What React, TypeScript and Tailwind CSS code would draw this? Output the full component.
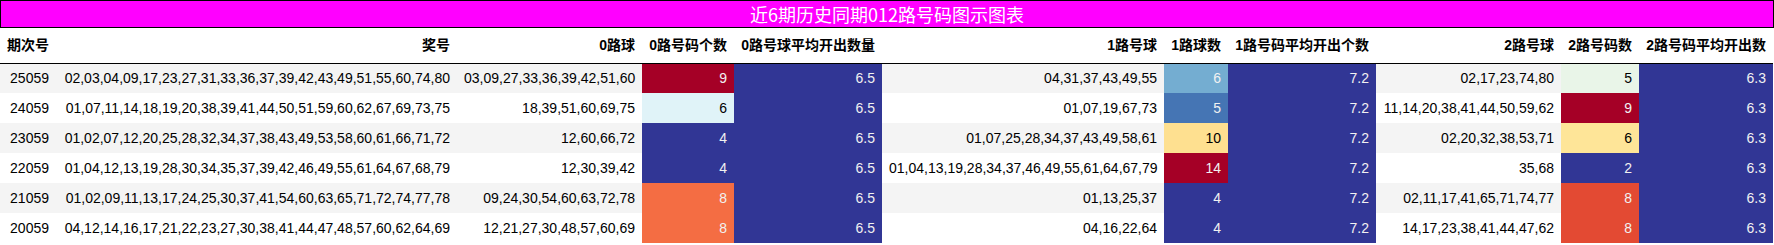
type Row = {
  issue: string;
  prize: string;
  r0: string;
  c0: number;
  bg0: string;
  avg0: string;
  r1: string;
  c1: number;
  bg1: string;
  avg1: string;
  r2: string;
  c2: number;
  bg2: string;
  avg2: string;
};

// colours taken from the RdYlBu_r gradient of each count column
const DARK = "bg-[#313695] text-[#f1f1f1]";

const rows: Row[] = [
  {
    issue: "25059",
    prize: "02,03,04,09,17,23,27,31,33,36,37,39,42,43,49,51,55,60,74,80",
    r0: "03,09,27,33,36,39,42,51,60",
    c0: 9,
    bg0: "bg-[#a50026] text-[#f1f1f1]",
    avg0: "6.5",
    r1: "04,31,37,43,49,55",
    c1: 6,
    bg1: "bg-[#74add1] text-[#f1f1f1]",
    avg1: "7.2",
    r2: "02,17,23,74,80",
    c2: 5,
    bg2: "bg-[#e9f5e8] text-black",
    avg2: "6.3",
  },
  {
    issue: "24059",
    prize: "01,07,11,14,18,19,20,38,39,41,44,50,51,59,60,62,67,69,73,75",
    r0: "18,39,51,60,69,75",
    c0: 6,
    bg0: "bg-[#e0f3f8] text-black",
    avg0: "6.5",
    r1: "01,07,19,67,73",
    c1: 5,
    bg1: "bg-[#4575b4] text-[#f1f1f1]",
    avg1: "7.2",
    r2: "11,14,20,38,41,44,50,59,62",
    c2: 9,
    bg2: "bg-[#a50026] text-[#f1f1f1]",
    avg2: "6.3",
  },
  {
    issue: "23059",
    prize: "01,02,07,12,20,25,28,32,34,37,38,43,49,53,58,60,61,66,71,72",
    r0: "12,60,66,72",
    c0: 4,
    bg0: DARK,
    avg0: "6.5",
    r1: "01,07,25,28,34,37,43,49,58,61",
    c1: 10,
    bg1: "bg-[#fee090] text-black",
    avg1: "7.2",
    r2: "02,20,32,38,53,71",
    c2: 6,
    bg2: "bg-[#fee598] text-black",
    avg2: "6.3",
  },
  {
    issue: "22059",
    prize: "01,04,12,13,19,28,30,34,35,37,39,42,46,49,55,61,64,67,68,79",
    r0: "12,30,39,42",
    c0: 4,
    bg0: DARK,
    avg0: "6.5",
    r1: "01,04,13,19,28,34,37,46,49,55,61,64,67,79",
    c1: 14,
    bg1: "bg-[#a50026] text-[#f1f1f1]",
    avg1: "7.2",
    r2: "35,68",
    c2: 2,
    bg2: DARK,
    avg2: "6.3",
  },
  {
    issue: "21059",
    prize: "01,02,09,11,13,17,24,25,30,37,41,54,60,63,65,71,72,74,77,78",
    r0: "09,24,30,54,60,63,72,78",
    c0: 8,
    bg0: "bg-[#f46d43] text-[#f1f1f1]",
    avg0: "6.5",
    r1: "01,13,25,37",
    c1: 4,
    bg1: DARK,
    avg1: "7.2",
    r2: "02,11,17,41,65,71,74,77",
    c2: 8,
    bg2: "bg-[#e34a33] text-[#f1f1f1]",
    avg2: "6.3",
  },
  {
    issue: "20059",
    prize: "04,12,14,16,17,21,22,23,27,30,38,41,44,47,48,57,60,62,64,69",
    r0: "12,21,27,30,48,57,60,69",
    c0: 8,
    bg0: "bg-[#f46d43] text-[#f1f1f1]",
    avg0: "6.5",
    r1: "04,16,22,64",
    c1: 4,
    bg1: DARK,
    avg1: "7.2",
    r2: "14,17,23,38,41,44,47,62",
    c2: 8,
    bg2: "bg-[#e34a33] text-[#f1f1f1]",
    avg2: "6.3",
  },
];

const headers = [
  "期次号",
  "奖号",
  "0路球",
  "0路号码个数",
  "0路号球平均开出数量",
  "1路号球",
  "1路球数",
  "1路号码平均开出个数",
  "2路号球",
  "2路号码数",
  "2路号码平均开出数",
];

const widths = [56, 401, 185, 92, 148, 282, 64, 148, 185, 78, 134];

export default function App() {
  const td = "px-[7px] text-right whitespace-nowrap";

  return (
    <div className="w-[1774px] bg-white font-['Liberation_Sans','Noto_Sans_CJK_SC',sans-serif] text-[14px] text-black">
      {/* title bar */}
      <div className="w-[1774px] h-[28px] bg-[#ff00ff] border border-black flex items-center justify-center">
        <span className="text-white text-[18px] leading-none font-['Noto_Sans_CJK_SC',sans-serif]">
          近6期历史同期012路号码图示图表
        </span>
      </div>

      <table className="table-fixed border-collapse w-[1773px]">
        <colgroup>
          {widths.map((w, i) => (
            <col key={i} style={{ width: w }} />
          ))}
        </colgroup>
        <thead>
          <tr className="h-[35px] border-b border-black">
            {headers.map((h) => (
              <th key={h} className="px-[7px] text-right font-bold whitespace-nowrap">
                {h}
              </th>
            ))}
          </tr>
        </thead>
        <tbody>
          {rows.map((r, i) => (
            <tr key={r.issue} className={`h-[30px] ${i % 2 === 0 ? "bg-[#f4f4f4]" : "bg-white"}`}>
              <td className={td}>{r.issue}</td>
              <td className={td}>{r.prize}</td>
              <td className={td}>{r.r0}</td>
              <td className={`${td} ${r.bg0}`}>{r.c0}</td>
              <td className={`${td} ${DARK}`}>{r.avg0}</td>
              <td className={td}>{r.r1}</td>
              <td className={`${td} ${r.bg1}`}>{r.c1}</td>
              <td className={`${td} ${DARK}`}>{r.avg1}</td>
              <td className={td}>{r.r2}</td>
              <td className={`${td} ${r.bg2}`}>{r.c2}</td>
              <td className={`${td} ${DARK}`}>{r.avg2}</td>
            </tr>
          ))}
        </tbody>
      </table>
    </div>
  );
}
